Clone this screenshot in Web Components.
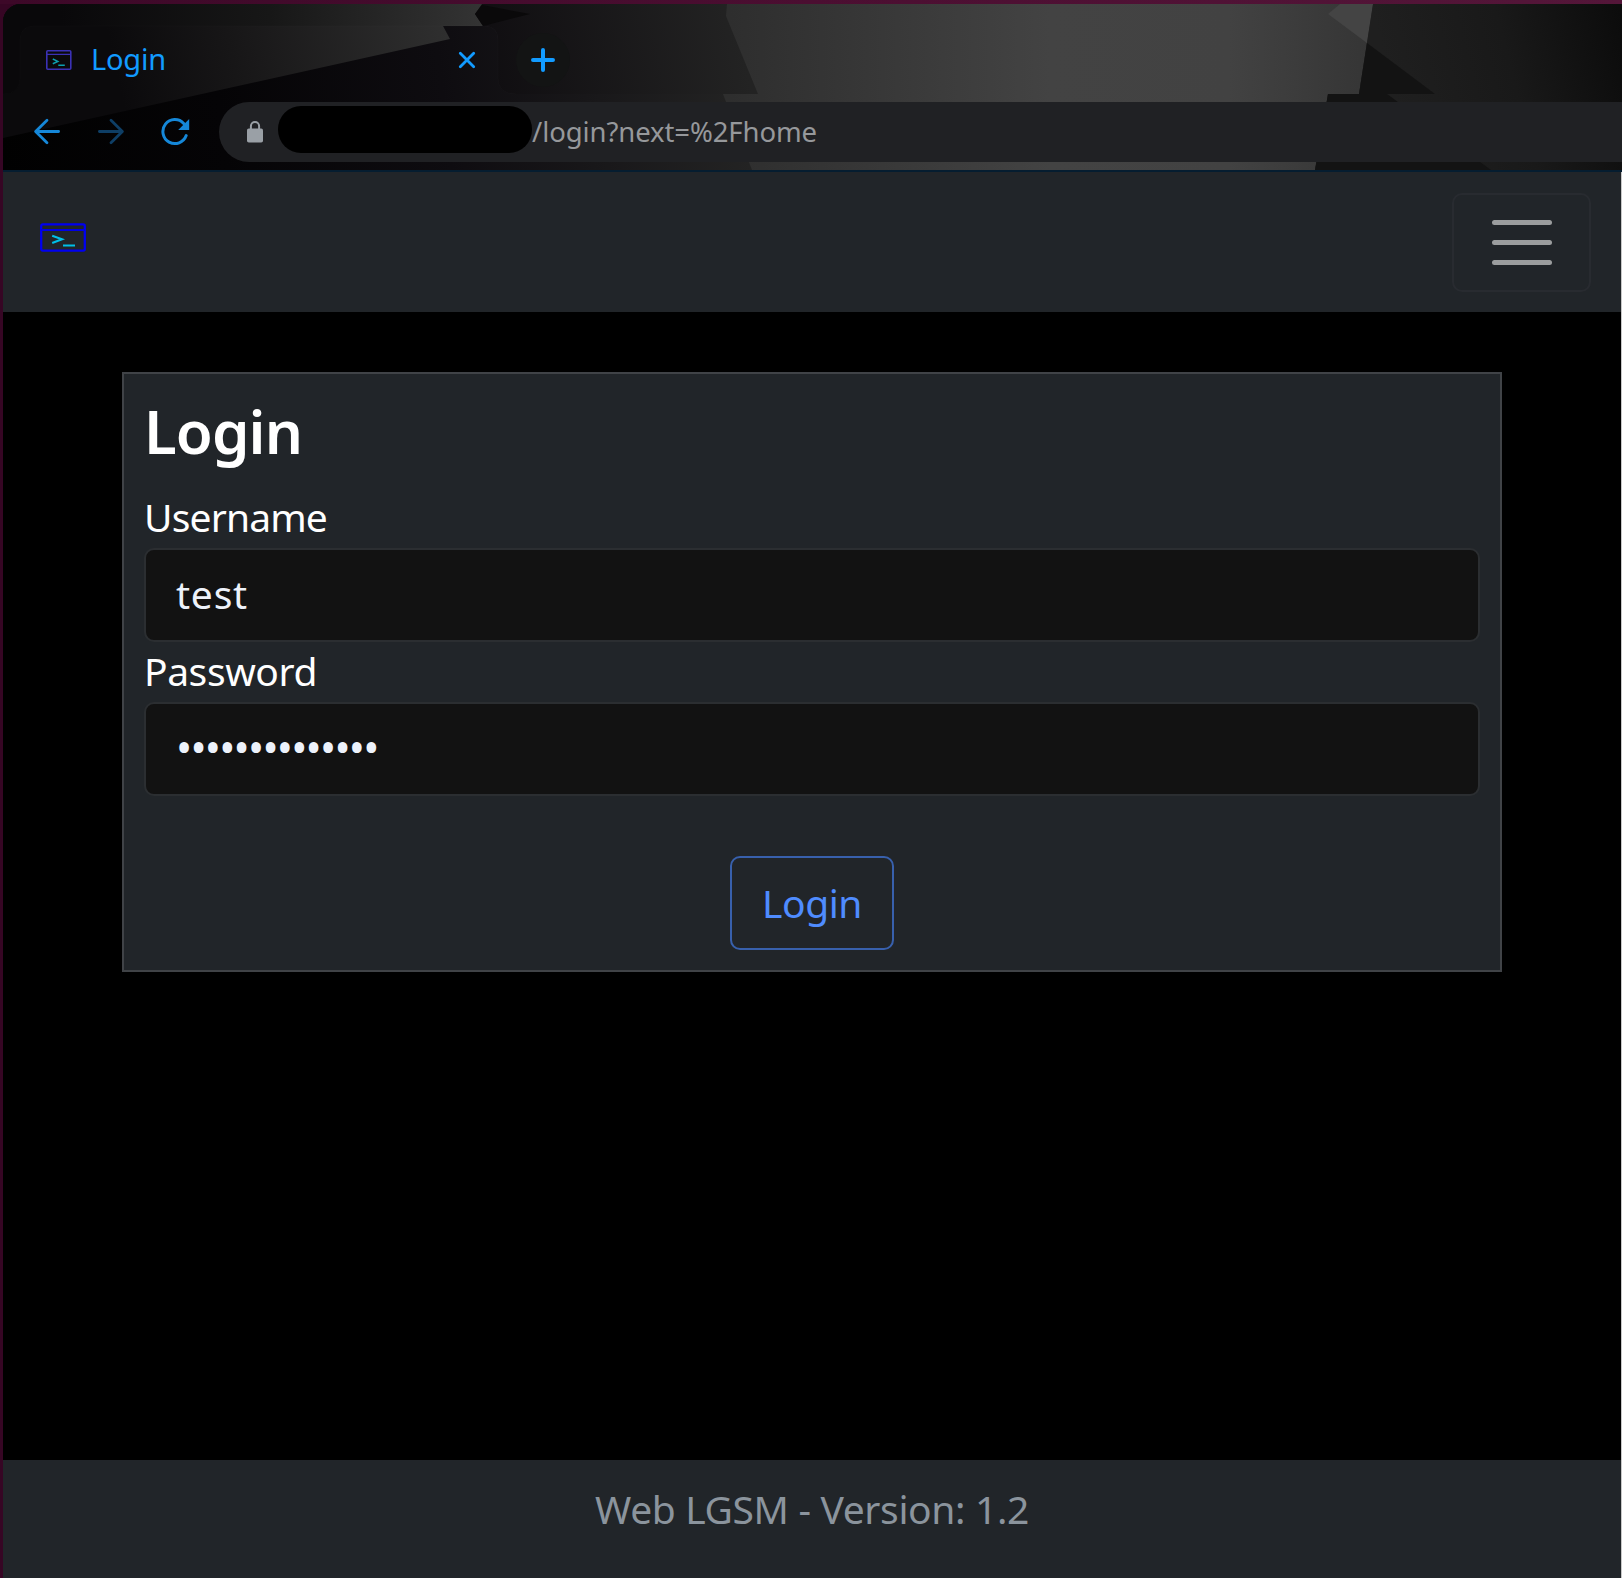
<!DOCTYPE html>
<html lang="en">
<head>
<meta charset="utf-8">
<title>Login</title>
<style>
html,body{margin:0;height:100%}
body{background:#000;font-family:"Noto Sans","Open Sans",sans-serif;color:#fff;overflow:hidden}
.dots{font-size:43px}
</style>
</head>
<body>
<desktop-window>
  <browser-chrome slot="chrome" tab-title="Login" path="/login?next=%2Fhome"></browser-chrome>
  <nav-bar></nav-bar>
  <login-card heading="Login">
    <form-field label="Username" width="183"><fit-text width="72">test</fit-text></form-field>
    <form-field label="Password" width="173"><fit-text class="dots" width="201.6">••••••••••••••</fit-text></form-field>
    <outline-button slot="action"><fit-text width="100">Login</fit-text></outline-button>
  </login-card>
  <page-footer slot="footer"><fit-text width="434">Web LGSM - Version: 1.2</fit-text></page-footer>
</desktop-window>
<script>
const define = (name, html, after) => customElements.define(name, class extends HTMLElement {
  connectedCallback() {
    if (this.shadowRoot) return;
    const root = this.attachShadow({mode: 'open'});
    root.innerHTML = html(this);
    if (after) after(this, root);
  }
});

define('terminal-icon', el => el.hasAttribute('small') ? `<style>:host,svg{display:block}</style>
<svg width="26" height="20" viewBox="0 0 26 20" fill="none"><rect x=".8" y=".8" width="24" height="18.4" rx="1" stroke="#3b31b5" stroke-width="1.6"/><path d="M1 4.4H25" stroke="#3b31b5" stroke-width="1.3"/><path d="M6.8 9L11.8 11.4L6.8 13.8M12.3 15.2H18.8" stroke="#0d9fae" stroke-width="1.5"/></svg>`
: `<style>:host,svg{display:block}</style>
<svg width="46" height="29" viewBox="0 0 46 29" fill="none"><rect x="1.2" y="1.4" width="43.6" height="26.2" rx="1.5" stroke="#0000f0" stroke-width="2.3"/><path d="M1 7H45" stroke="#0000e6" stroke-width="2"/><path d="M12.2 12.8L22 16.3L12.2 20M23 22.5H35" stroke="#00bfe8" stroke-width="2.1"/></svg>`);

define('desktop-window', () => `<style>
:host{display:grid;grid-template-columns:minmax(0,1fr);box-sizing:border-box;width:1622px;height:1578px;padding:4px 0 0 3px;background:linear-gradient(90deg,#3d0828,#4b0e31 50%,#541639)0 0/100% 4px no-repeat,#360624}
.win{display:flex;flex-direction:column;min-height:0;background:#000;border-top-left-radius:18px;overflow:hidden}
.view{flex:1;display:flex;flex-direction:column;border-right:1px solid #c8c8c8}
main{flex:1}
</style><div class="win"><slot name="chrome"></slot><div class="view"><main><slot></slot></main><slot name="footer"></slot></div></div>`);

define('theme-backdrop', () => `<style>:host,svg{display:block}</style>
<svg width="1619" height="166" viewBox="3 4 1619 166" preserveAspectRatio="none">
<defs>
<linearGradient id="a" gradientUnits="userSpaceOnUse" x1="60" y1="0" x2="480" y2="0"><stop offset="0" stop-color="#09080a"/><stop offset=".5" stop-color="#171717"/><stop offset="1" stop-color="#333"/></linearGradient>
<linearGradient id="b" gradientUnits="userSpaceOnUse" x1="480" y1="80" x2="740" y2="30"><stop offset="0" stop-color="#0f0d10"/><stop offset="1" stop-color="#232323"/></linearGradient>
<linearGradient id="c" gradientUnits="userSpaceOnUse" x1="730" y1="0" x2="1370" y2="0"><stop offset="0" stop-color="#2e2e2e"/><stop offset=".5" stop-color="#434343"/><stop offset=".78" stop-color="#424242"/><stop offset="1" stop-color="#353535"/></linearGradient>
<linearGradient id="d" gradientUnits="userSpaceOnUse" x1="1390" y1="80" x2="1622" y2="20"><stop offset="0" stop-color="#1f1f1f"/><stop offset=".5" stop-color="#191919"/><stop offset="1" stop-color="#0c0c0c"/></linearGradient>
<linearGradient id="e" gradientUnits="userSpaceOnUse" x1="120" y1="90" x2="445" y2="20"><stop offset="0" stop-color="#0b0a0c"/><stop offset=".35" stop-color="#171617"/><stop offset="1" stop-color="#2f2f2f"/></linearGradient>
<linearGradient id="f" gradientUnits="userSpaceOnUse" x1="3" y1="170" x2="740" y2="80"><stop offset="0" stop-color="#010101"/><stop offset=".3" stop-color="#050406"/><stop offset=".6" stop-color="#0e0c10"/><stop offset="1" stop-color="#232323"/></linearGradient>
<clipPath id="t"><path d="M3 94Q20 94 20 78V40Q20 26 34 26H484Q498 26 498 40V78Q498 94 516 94H1622V170H3Z"/></clipPath>
</defs>
<path fill="url(#b)" d="M3 4H1622V94H3Z"/>
<path fill="url(#a)" d="M3 4H482L475 14L483 26V94H3Z"/>
<path fill="#0a090a" d="M482 5L475 14L483 26L530 14Z"/>
<path fill="url(#c)" d="M727 4L726 16L758 94H1359L1373 4Z"/>
<path fill="#444" d="M1328 14L1340 4H1373L1367 43Z"/>
<path fill="url(#d)" d="M1373 4H1622V94H1359Z"/>
<path fill="#131313" d="M1367 43L1435 94H1359Z"/>
<g clip-path="url(#t)">
<path fill="url(#f)" d="M3 26H1622V170H3Z"/>
<path fill="url(#e)" d="M3 26H443L450 39L3 138Z"/>
<path fill="url(#c)" d="M723 94L752 170H1315L1328 94Z"/>
<path fill="url(#d)" d="M1328 94H1622V170H1315Z"/>
<path fill="#131313" d="M1328 94H1387L1491 170H1315Z"/>
</g>
<path fill="none" stroke="#fff" stroke-opacity=".02" d="M3 94Q20 94 20 78V40Q20 26 34 26H484Q498 26 498 40V78Q498 94 516 94"/>
</svg>`);

define('browser-chrome', el => `<style>
:host{display:grid;grid-template-columns:minmax(0,1fr);height:166px;border-bottom:2px solid #051d30;box-sizing:content-box;flex:none}
theme-backdrop,.rows{grid-area:1/1}
.rows{display:flex;flex-direction:column;z-index:1}
svg{display:block;flex:none}
.tabs{display:flex;align-items:center;height:68px;margin-top:22px}
.tab{display:flex;align-items:center;box-sizing:border-box;width:478px;height:68px;margin-left:17px;padding:0 22px 0 26px}
.title{margin:0 auto 0 19px;font-size:29px;line-height:38px;color:#129bff;padding-bottom:2px}
.new{display:grid;place-items:center;width:54px;height:54px;border-radius:50%;background:#131414;margin-left:18px}
.tools{display:flex;align-items:center;height:60px;margin-top:8px;padding-left:30px}
.fwd{margin-left:36px}.reload{margin-left:36px}
.omni{display:flex;align-items:center;flex:1;height:60px;margin-left:28px;border-radius:30px 0 0 30px;background:#202124;padding-left:28px}
.mask{width:254px;height:47px;border-radius:23px;background:#000;margin:0 0 5px 15px}
.url{font-size:27.5px;line-height:40px;color:#96989b}
</style>
<theme-backdrop></theme-backdrop>
<div class="rows">
<div class="tabs"><div class="tab"><terminal-icon small></terminal-icon><span class="title"><fit-text width="75">${el.getAttribute('tab-title')}</fit-text></span>
<svg width="18" height="18" fill="none" stroke="#129bff" stroke-width="2.8" stroke-linecap="round"><path d="M2.3 2.3L15.7 15.7M15.7 2.3L2.3 15.7"/></svg></div>
<div class="new"><svg width="24" height="24" fill="none" stroke="#129bff" stroke-width="4" stroke-linecap="round"><path d="M2 12H22M12 2V22"/></svg></div></div>
<div class="tools">
<svg width="28" height="28" fill="none" stroke="#1587d8" stroke-width="2.8" stroke-linecap="round" stroke-linejoin="round"><path d="M25.6 13.5H3M14 2.3L2.6 13.5L14 24.8"/></svg>
<svg class="fwd" width="28" height="28" fill="none" stroke="#0e3e65" stroke-width="2.8" stroke-linecap="round" stroke-linejoin="round"><path d="M2.4 13.5H25M14 2.3L25.4 13.5L14 24.8"/></svg>
<svg class="reload" width="30" height="28" fill="none"><path d="M25.2 17.6A12 12 0 1 1 22.7 5.4" stroke="#1587d8" stroke-width="3" stroke-linecap="round"/><path d="M28.2 1V12H17.2Z" fill="#1587d8"/></svg>
<div class="omni"><svg width="16" height="22"><rect y="7.5" width="16" height="14" rx="1.8" fill="#9aa0a6"/><path d="M3.9 8V5.1A4.1 4.1 0 0 1 12.1 5.1V8" fill="none" stroke="#9aa0a6" stroke-width="2"/></svg>
<div class="mask"></div><span class="url"><fit-text width="285">${el.getAttribute('path')}</fit-text></span></div>
</div></div>`);

define('nav-bar', () => `<style>
:host{display:flex;justify-content:space-between;box-sizing:border-box;height:140px;padding:21px 30px 20px 37px;background:#212529}
terminal-icon{margin-top:30px}
button{all:unset;box-sizing:border-box;width:139px;height:99px;border:2px solid #282b30;border-radius:10px;display:flex;flex-direction:column;align-items:center;justify-content:center;gap:15px}
i{width:60px;height:5px;border-radius:2.5px;background:#9b9d9e}
</style><terminal-icon></terminal-icon><button aria-label="Menu"><i></i><i></i><i></i></button>`);

define('login-card', el => `<style>
:host{display:flex;flex-direction:column;box-sizing:border-box;width:1380px;height:600px;margin:60px 0 0 119px;padding:20px;border:2px solid #404347;background:#212529}
h1{margin:0 0 20px;font-size:60px;font-weight:600;line-height:74px}
.action{display:flex;justify-content:center;margin-top:60px}
</style><h1><fit-text width="158">${el.getAttribute('heading')}</fit-text></h1><slot></slot><div class="action"><slot name="action"></slot></div>`);

define('form-field', el => `<style>
:host{display:block;font-size:39px}
.label{display:block;height:60px;line-height:58px}
.box{box-sizing:border-box;height:94px;border:2px solid #2b2e31;border-radius:10px;background:#121212;color:#edf2fb;padding:0 30px;line-height:88px}
</style><div class="label"><fit-text width="${el.getAttribute('width')}">${el.getAttribute('label')}</fit-text></div><div class="box"><slot></slot></div>`);

define('outline-button', () => `<style>
:host{display:block}
button{all:unset;display:block;box-sizing:border-box;width:164px;height:94px;border:2px solid #3860ac;border-radius:10px;padding:0 30px;font-size:39px;line-height:88px;color:#4f8cff}
</style><button><slot></slot></button>`);

define('page-footer', () => `<style>
:host{display:flex;justify-content:center;height:118px;background:#212529;color:#8b949d;font-size:39px;line-height:98px}
</style><slot></slot>`);

/* Tracks its text so that it fills the given advance width.
   Registered last: its hosts' font sizes have to be in place when it measures. */
define('fit-text', () => `<style>
:host{display:inline-block;white-space:pre}
span{display:inline-block}
</style><span><slot></slot></span>`, (el, root) => {
  const span = root.querySelector('span');
  const n = el.textContent.length;
  const gap = (parseFloat(el.getAttribute('width')) - span.getBoundingClientRect().width) / n;
  span.style.letterSpacing = gap.toFixed(3) + 'px';
});
</script>
</body>
</html>
